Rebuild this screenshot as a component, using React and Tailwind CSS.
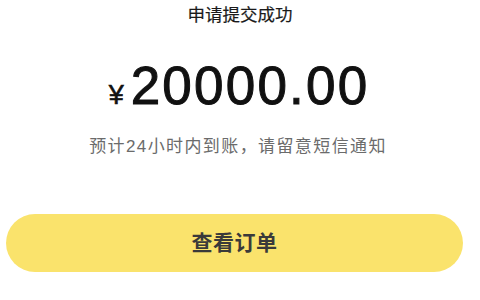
export default function App() {
  return (
    <div className="w-[480px] h-[300px] bg-white flex flex-col items-center overflow-hidden" style={{ fontFamily: '"Liberation Sans", "Noto Sans CJK SC", sans-serif' }}>
      <div className="mt-[3px] h-[24px] leading-[24px] text-[17.5px] text-[#1a1a1a] [-webkit-text-stroke:0.2px_#1a1a1a]">申请提交成功</div>
      <div className="mt-[35px] flex items-baseline h-[48px] leading-[48px] text-[#111] ml-[-2px]">
        <span className="text-[27px] mr-[7px] [-webkit-text-stroke:0.6px_#111]">¥</span>
        <span className="text-[53px] tracking-[2.2px] [-webkit-text-stroke:1px_#111]">20000.00</span>
      </div>
      <div className="mt-[25px] h-[24px] leading-[24px] text-[17px] tracking-[1.4px] text-[#6b6b6b] ml-[-4px]">预计24小时内到账，请留意短信通知</div>
      <div className="mt-[55px] w-[457px] ml-[-11px] h-[58px] rounded-full bg-[#fae36c] flex items-center justify-center">
        <span className="text-[21px] font-semibold tracking-[0.5px] text-[#3a3a3a]">查看订单</span>
      </div>
    </div>
  );
}
